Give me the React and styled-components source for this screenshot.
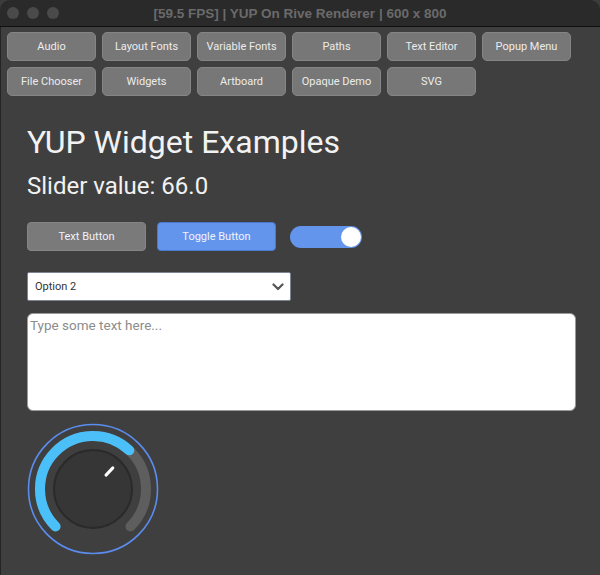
import React from 'react';
import styled, { createGlobalStyle } from 'styled-components';

const GlobalStyle = createGlobalStyle`
  html, body {
    margin: 0;
    padding: 0;
    background: #3c3c3c;
    font-family: Roboto, "Liberation Sans", sans-serif;
  }
`;

const Window = styled.div`
  width: 600px;
  height: 575px;
  display: flex;
  flex-direction: column;
  background: #3f3f3f;
  border-radius: 10px 10px 0 0;
  overflow: hidden;
`;

const TitleBar = styled.div`
  position: relative;
  height: 26px;
  flex-shrink: 0;
  display: flex;
  align-items: center;
  justify-content: center;
  background: #2a2a2a;
  border-bottom: 1px solid #101010;
`;

const Lights = styled.div`
  position: absolute;
  left: 7px;
  top: 7px;
  display: flex;
  gap: 8px;
`;

const Light = styled.span`
  width: 12px;
  height: 12px;
  border-radius: 50%;
  background: #4a4a4a;
`;

const TitleText = styled.span`
  font-family: "Liberation Sans", Arial, sans-serif;
  font-weight: 700;
  font-size: 13.5px;
  color: #6a6a6a;
`;

const Body = styled.div`
  flex: 1;
  border-left: 1px solid #242424;
  display: flex;
  flex-direction: column;
`;

const NavGrid = styled.div`
  display: grid;
  grid-template-columns: repeat(6, 89px);
  grid-auto-rows: 29px;
  column-gap: 6px;
  row-gap: 6px;
  padding: 5px 0 0 6px;
`;

const NavButton = styled.button`
  box-sizing: border-box;
  background: #777777;
  border: 1px solid #858585;
  border-radius: 5px;
  color: #ececec;
  font-family: Roboto, "Liberation Sans", sans-serif;
  font-size: 11px;
  padding: 0;
`;

const Content = styled.div`
  display: flex;
  flex-direction: column;
  align-items: flex-start;
  padding: 30px 0 0 26px;
`;

const Heading = styled.h1`
  margin: 0;
  font-weight: 400;
  font-size: 32px;
  line-height: 32px;
  color: #f2f2f2;
`;

const SliderValue = styled.div`
  margin-top: 16px;
  font-size: 24px;
  line-height: 24px;
  color: #f2f2f2;
`;

const ButtonRow = styled.div`
  margin-top: 24px;
  display: flex;
  align-items: center;
  gap: 11px;
`;

const WidgetButton = styled.button`
  box-sizing: border-box;
  width: 119px;
  height: 29px;
  border-radius: 4px;
  border: 1px solid ${p => (p.$active ? '#4b79cc' : '#858585')};
  background: ${p => (p.$active ? '#6495ed' : '#7a7a7a')};
  color: #eef2fa;
  font-family: Roboto, "Liberation Sans", sans-serif;
  font-size: 11px;
  padding: 0;
`;

const Switch = styled.div`
  box-sizing: border-box;
  margin-left: 3px;
  width: 72px;
  height: 22px;
  border-radius: 11px;
  background: #6495ed;
  display: flex;
  align-items: center;
  justify-content: flex-end;
  padding-right: 1px;
`;

const SwitchKnob = styled.span`
  width: 20px;
  height: 20px;
  border-radius: 50%;
  background: #ffffff;
`;

const Select = styled.div`
  box-sizing: border-box;
  margin-top: 21px;
  width: 264px;
  height: 29px;
  background: #ffffff;
  border: 1px solid #7d8494;
  border-radius: 2px;
  display: flex;
  align-items: center;
  justify-content: space-between;
  padding: 0 6px 0 7px;
  font-size: 11px;
  color: #333333;
`;

const TextArea = styled.div`
  box-sizing: border-box;
  margin-top: 12px;
  width: 549px;
  height: 98px;
  background: #ffffff;
  border: 1px solid #9a9a9a;
  border-radius: 6px;
  padding: 3px 2px;
  font-size: 13.5px;
  color: #8c8c8c;
`;

const KnobWrap = styled.div`
  margin-top: 12px;
  width: 132px;
  height: 132px;
`;

const navItems = [
  'Audio', 'Layout Fonts', 'Variable Fonts', 'Paths', 'Text Editor', 'Popup Menu',
  'File Chooser', 'Widgets', 'Artboard', 'Opaque Demo', 'SVG',
];

const Knob = ({ value }) => {
  const c = 66;
  const r = 53;
  const pt = (deg, rad) => {
    const a = (deg * Math.PI) / 180;
    return [c + rad * Math.sin(a), c - rad * Math.cos(a)];
  };
  const end = -135 + (value / 100) * 270;
  const [sx, sy] = pt(-135, r);
  const [tx, ty] = pt(135, r);
  const [ex, ey] = pt(end, r);
  const [ix1, iy1] = pt(end, 19);
  const [ix2, iy2] = pt(end, 29);
  return (
    <svg width="132" height="132" viewBox="0 0 132 132">
      <circle cx={c} cy={c} r="64.5" fill="none" stroke="#5b8def" strokeWidth="1.6" />
      <path d={`M ${sx} ${sy} A ${r} ${r} 0 1 1 ${tx} ${ty}`} fill="none" stroke="#5e5e5e" strokeWidth="10" strokeLinecap="round" />
      <path d={`M ${sx} ${sy} A ${r} ${r} 0 ${end + 135 > 180 ? 1 : 0} 1 ${ex} ${ey}`} fill="none" stroke="#4bbff8" strokeWidth="10" strokeLinecap="round" />
      <circle cx={c} cy={c} r="39" fill="#363636" stroke="#2a2a2a" strokeWidth="2" />
      <line x1={ix1} y1={iy1} x2={ix2} y2={iy2} stroke="#ffffff" strokeWidth="3" strokeLinecap="round" />
    </svg>
  );
};

export default function App() {
  return (
    <>
      <GlobalStyle />
      <Window>
        <TitleBar>
          <Lights>
            <Light />
            <Light />
            <Light />
          </Lights>
          <TitleText>[59.5 FPS] | YUP On Rive Renderer | 600 x 800</TitleText>
        </TitleBar>
        <Body>
          <NavGrid>
            {navItems.map(n => (
              <NavButton key={n}>{n}</NavButton>
            ))}
          </NavGrid>
          <Content>
            <Heading>YUP Widget Examples</Heading>
            <SliderValue>Slider value: 66.0</SliderValue>
            <ButtonRow>
              <WidgetButton>Text Button</WidgetButton>
              <WidgetButton $active>Toggle Button</WidgetButton>
              <Switch>
                <SwitchKnob />
              </Switch>
            </ButtonRow>
            <Select>
              <span>Option 2</span>
              <svg width="12" height="8" viewBox="0 0 12 8">
                <polyline points="1.5,1.5 6,6 10.5,1.5" fill="none" stroke="#555555" strokeWidth="2.2" strokeLinecap="round" strokeLinejoin="round" />
              </svg>
            </Select>
            <TextArea>Type some text here...</TextArea>
            <KnobWrap>
              <Knob value={66} />
            </KnobWrap>
          </Content>
        </Body>
      </Window>
    </>
  );
}
